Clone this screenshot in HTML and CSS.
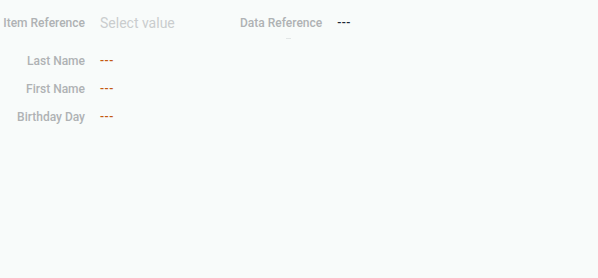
FILE: index.html
```html
<!DOCTYPE html>
<html>
<head>
<meta charset="utf-8">
<link rel="stylesheet" href="styles.css">
</head>
<body>
<div class="page">
  <div class="top-row">
    <div class="label">Item Reference</div>
    <div class="select">
      <span class="placeholder">Select value</span>
      <span class="tick"></span>
    </div>
    <div class="label label-auto">Data Reference</div>
    <div class="value value-dark">---</div>
  </div>
  <div class="row">
    <div class="label">Last Name</div>
    <div class="value value-orange">---</div>
  </div>
  <div class="row">
    <div class="label">First Name</div>
    <div class="value value-orange">---</div>
  </div>
  <div class="row">
    <div class="label">Birthday Day</div>
    <div class="value value-orange">---</div>
  </div>
</div>
</body>
</html>
```
FILE: styles.css
```css
html, body {
  margin: 0;
  padding: 0;
  height: 100%;
}
body {
  background: #f8fbfa;
  font-family: Roboto, "Liberation Sans", sans-serif;
}
.page {
  display: flex;
  flex-direction: column;
  padding-top: 1px;
}
.top-row {
  display: flex;
  align-items: center;
  height: 44px;
  margin-bottom: 2px;
}
.row {
  display: flex;
  align-items: center;
  height: 28px;
}
.label {
  width: 85px;
  text-align: right;
  font-size: 12px;
  font-weight: 500;
  color: #afb2b4;
  flex: none;
  margin-right: 15px;
  white-space: nowrap;
}
.label-auto {
  width: auto;
}
.select {
  width: 140px;
  flex: none;
  position: relative;
  height: 44px;
  display: flex;
  align-items: center;
}
.placeholder {
  font-size: 14px;
  color: #cacdce;
}
.tick {
  position: absolute;
  left: 186px;
  top: 37px;
  width: 5px;
  height: 1px;
  background: #e2e6e6;
}
.value {
  font-size: 12px;
  font-weight: 500;
  letter-spacing: 0.5px;
}
.value-orange {
  color: #c45a10;
}
.value-dark {
  color: #1e2838;
}
```
